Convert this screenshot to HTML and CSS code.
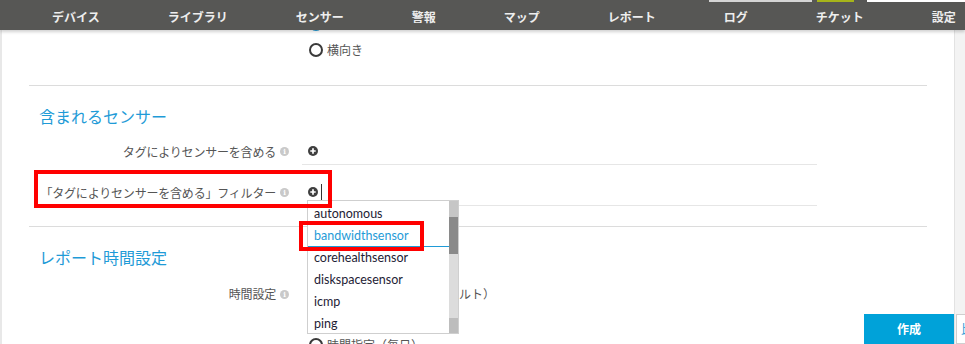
FILE: index.html
```html
<!DOCTYPE html>
<html>
<head>
  <title>レポート設定</title>
  <link rel="stylesheet" href="styles.css">
</head>
<body>

<div class="page">

  <main class="content">

    <!-- 用紙 -->
    <section class="section section-first">
      <div class="field">
        <div class="field-label">用紙の向き <span class="info">i</span></div>
        <div class="field-value">
          <label class="radio checked"><span class="radio-circle"></span>縦向き</label>
        </div>
      </div>
      <div class="field">
        <div class="field-label"></div>
        <div class="field-value">
          <label class="radio"><span class="radio-circle"></span>横向き</label>
        </div>
      </div>
    </section>

    <!-- 含まれるセンサー -->
    <section class="section">
      <h2 class="section-title">含まれるセンサー</h2>
      <div class="fields">
        <div class="field">
          <div class="field-label">タグによりセンサーを含める <span class="info">i</span></div>
          <div class="field-value lined">
            <svg class="plus" width="10" height="10" viewBox="0 0 10 10"><circle cx="5" cy="5" r="5" fill="#3f3f3f"/><path d="M5 2.3v5.4M2.3 5h5.4" stroke="#fff" stroke-width="1.7"/></svg>
          </div>
        </div>
        <div class="field">
          <div class="field-label">「タグによりセンサーを含める」フィルター <span class="info">i</span></div>
          <div class="field-value lined">
            <svg class="plus" width="10" height="10" viewBox="0 0 10 10"><circle cx="5" cy="5" r="5" fill="#3f3f3f"/><path d="M5 2.3v5.4M2.3 5h5.4" stroke="#fff" stroke-width="1.7"/></svg>
            <span class="cursor"></span>
          </div>

          <div class="dropdown">
            <ul class="options">
              <li>autonomous</li>
              <li class="hover">bandwidthsensor</li>
              <li>corehealthsensor</li>
              <li>diskspacesensor</li>
              <li>icmp</li>
              <li>ping</li>
            </ul>
            <div class="scrollbar">
              <div class="sb-top"></div>
              <div class="sb-thumb"></div>
              <div class="sb-track"></div>
              <div class="sb-bottom"></div>
            </div>
            <div class="highlight hl-item"></div>
          </div>

          <div class="highlight hl-label"></div>
        </div>
      </div>
    </section>

    <!-- レポート時間設定 -->
    <section class="section section-last">
      <h2 class="section-title">レポート時間設定</h2>
      <div class="fields fields-time">
        <div class="field">
          <div class="field-label label-top">時間設定 <span class="info">i</span></div>
          <div class="radio-list">
            <label class="radio"><span class="radio-circle"></span>期間全体を使用（デフォルト）</label>
            <label class="radio"><span class="radio-circle"></span>時間指定（毎日）</label>
          </div>
        </div>
      </div>
    </section>

  </main>

  <aside class="side-strip"></aside>

  <button class="btn-create">作成</button>
  <button class="btn-next">比較</button>

  <header class="topbar">
    <div class="topbar-strip">
      <span class="strip-search"></span>
      <span class="strip-go"></span>
      <span class="strip-user"></span>
    </div>
    <nav class="mainnav">
      <a>デバイス</a>
      <a>ライブラリ</a>
      <a>センサー</a>
      <a>警報</a>
      <a>マップ</a>
      <a>レポート</a>
      <a>ログ</a>
      <a>チケット</a>
      <a>設定</a>
    </nav>
  </header>

</div>

</body>
</html>
```

FILE: styles.css
```css
body {
  margin: 0;
  font-family: "Open Sans", "Noto Sans CJK JP", sans-serif;
  background: #fff;
  overflow: hidden;
}

.page {
  display: flex;
  height: 344px;
  position: relative;
  overflow: hidden;
}

/* header (fixed over scrolled content) */
.topbar {
  position: absolute;
  top: 0;
  left: 0;
  right: 0;
  height: 30px;
  background: #575755;
  box-shadow: 0 2px 3px rgba(0,0,0,0.18);
  z-index: 10;
}

.topbar-strip {
  display: flex;
  height: 2px;
}

.strip-search {
  margin-left: auto;
  width: 103px;
  background: #d4d4d4;
}

.strip-go {
  width: 37px;
  margin-left: 5px;
  background: #a6b41a;
}

.strip-user {
  width: 98px;
  margin-left: 13px;
  background: #fff;
}

.mainnav {
  display: flex;
  align-items: center;
  height: 28px;
  padding-left: 18px;
  white-space: nowrap;
}

.mainnav a {
  padding: 2px 34px 0;
  color: #eeeeee;
  font-size: 12px;
  font-weight: bold;
}

/* content */
.content {
  flex: 1;
  border-left: 2px solid #e8e8e8;
  padding: 11px 27px 0;
}

.side-strip {
  width: 10px;
  background: #f3f3f3;
  border-left: 1px solid #e2e2e2;
}

.section {
  border-bottom: 1px solid #dcdcdc;
  padding: 19px 0 20px;
}

.section-first {
  padding: 0 0 22px;
}

.section-last {
  border-bottom: none;
}

.section-title {
  margin: 0;
  padding-left: 10px;
  font-size: 16px;
  font-weight: normal;
  line-height: 24px;
  color: #1f9bd7;
}

.fields {
  display: grid;
  row-gap: 14px;
  margin-top: 9px;
}

.fields-time {
  margin-top: 11px;
}

.field {
  display: grid;
  grid-template-columns: 273px 515px;
  position: relative;
}

.field-label {
  display: flex;
  justify-content: flex-end;
  align-items: center;
  gap: 4px;
  padding-right: 13px;
  font-size: 12px;
  letter-spacing: -0.2px;
  color: #555;
  white-space: nowrap;
}

.label-top {
  height: 26px;
}

.info {
  display: inline-block;
  width: 9px;
  height: 9px;
  border-radius: 50%;
  background: #c9c9c9;
  color: #fff;
  font-size: 7px;
  font-weight: bold;
  line-height: 9px;
  text-align: center;
  letter-spacing: 0;
  font-family: "DejaVu Serif", serif;
}

.field-value {
  height: 26px;
  display: flex;
  align-items: center;
}

.field-value.lined {
  border-bottom: 1px solid #e6e6e6;
}

.plus {
  margin-left: 6px;
}

.cursor {
  width: 1px;
  height: 17px;
  margin-left: 3px;
  background: #333;
}

/* radios */
.radio-list {
  display: flex;
  flex-direction: column;
  gap: 25px;
}

.radio {
  display: flex;
  align-items: center;
  gap: 4px;
  height: 26px;
  padding-left: 7px;
  font-size: 12px;
  color: #555;
  white-space: nowrap;
}

.radio-circle {
  width: 14px;
  height: 14px;
  box-sizing: border-box;
  border: 2px solid #3a3a3a;
  border-radius: 50%;
  position: relative;
}

.radio.checked .radio-circle {
  border-color: #1f9bd7;
}

.radio.checked .radio-circle::after {
  content: "";
  position: absolute;
  left: 2px;
  top: 2px;
  width: 6px;
  height: 6px;
  border-radius: 50%;
  background: #1f9bd7;
}

/* tag dropdown */
.dropdown {
  position: absolute;
  left: 278px;
  top: 21px;
  width: 152px;
  height: 134px;
  box-sizing: border-box;
  border: 1px solid #cfcfcf;
  background: #fff;
  display: flex;
  z-index: 2;
}

.options {
  flex: 1;
  list-style: none;
  margin: 8px 0 0;
  padding: 0;
  height: 124px;
  overflow: hidden;
}

.options li {
  height: 22px;
  line-height: 22px;
  padding-left: 6px;
  font-family: Lato, "Open Sans", sans-serif;
  font-size: 12.5px;
  color: #1e2235;
}

.options li:first-child {
  margin-top: -6px;
}

.options li.hover {
  color: #1f9bd7;
  box-shadow: inset 0 -1px 0 #1f9bd7;
}

.scrollbar {
  width: 9px;
  display: flex;
  flex-direction: column;
}

.sb-top {
  height: 16px;
  background: #c6c6c6;
}

.sb-thumb {
  height: 37px;
  background: #8a8a8a;
}

.sb-track {
  flex: 1;
  background: #dcdcdc;
}

.sb-bottom {
  height: 15px;
  background: #bdbdbd;
}

/* red annotation boxes */
.highlight {
  position: absolute;
  box-sizing: border-box;
  border: 4px solid #f00;
  z-index: 3;
}

.hl-label {
  left: 5px;
  top: -9px;
  width: 298px;
  height: 38px;
}

.hl-item {
  left: -9px;
  top: 20px;
  width: 125px;
  height: 30px;
}

/* bottom buttons */
.btn-create {
  position: absolute;
  right: 11px;
  bottom: 0;
  width: 90px;
  height: 30px;
  border: none;
  background: #00a2d9;
  color: #fff;
  font-family: inherit;
  font-size: 12px;
  font-weight: bold;
}

.btn-next {
  position: absolute;
  right: -24px;
  bottom: 0;
  width: 33px;
  height: 30px;
  border: 1px solid #cfcfcf;
  background: #fff;
  color: #1f9bd7;
  font-family: inherit;
  font-size: 12px;
  text-align: left;
  padding: 0 0 0 4px;
  white-space: nowrap;
  overflow: hidden;
}
```
